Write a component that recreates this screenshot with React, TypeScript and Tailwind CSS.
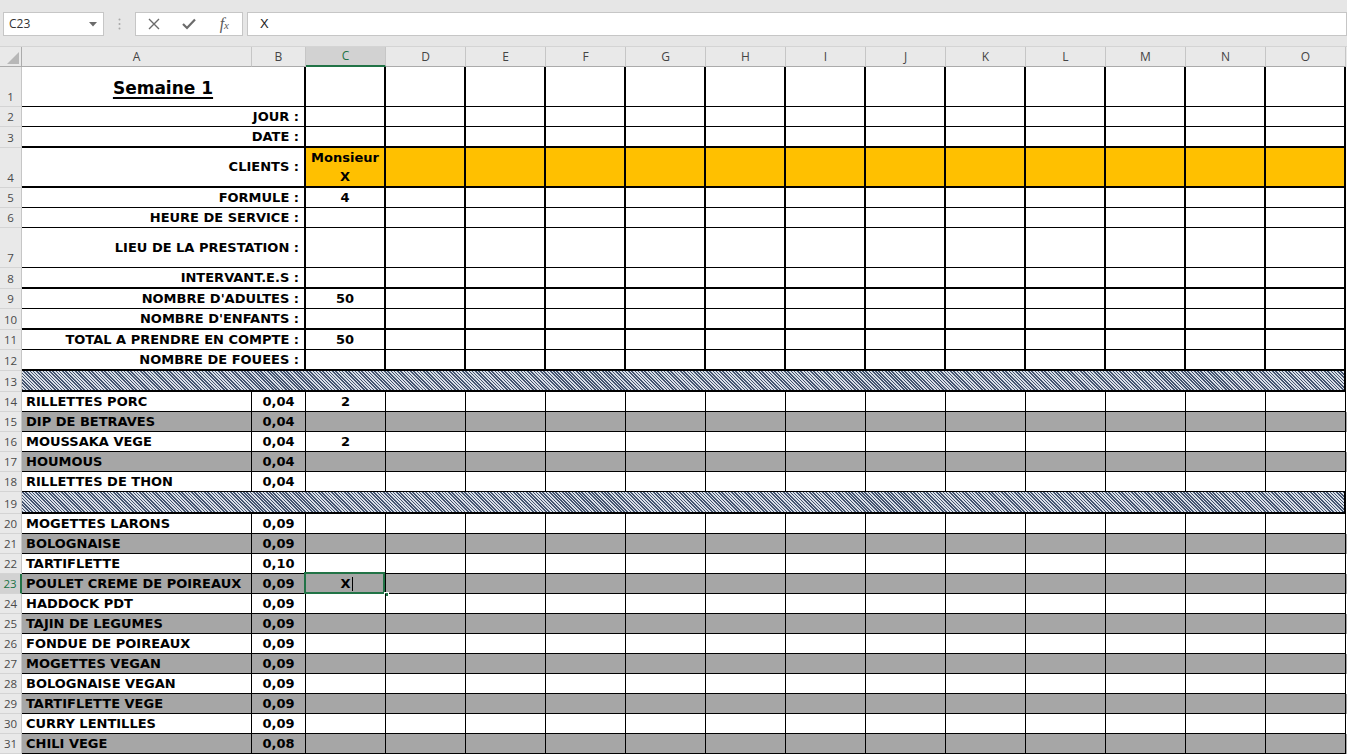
import React from 'react';

const LETTERS = ['C', 'D', 'E', 'F', 'G', 'H', 'I', 'J', 'K', 'L', 'M', 'N', 'O'];
const REST = ['D', 'E', 'F', 'G', 'H', 'I', 'J', 'K', 'L', 'M', 'N', 'O'];

const H: Record<number, string> = {
  20: 'h-[20px]',
  21: 'h-[21px]',
  22: 'h-[22px]',
  40: 'h-[40px]',
};

const CELLFONT = "font-['DejaVu_Sans',sans-serif] font-bold text-[13px] text-black";

function RowHeader({ n, sel }: { n: number; sel?: boolean }) {
  return (
    <div
      className={
        sel
          ? "w-[22px] shrink-0 flex items-end justify-center pb-[1px] bg-[#d2d2d2] border-r-2 border-r-[#217346] border-b border-b-[#d4d4d4] text-[#217346] text-[11.5px] font-['Open_Sans',sans-serif] leading-[16px]"
          : "w-[22px] shrink-0 flex items-end justify-center pb-[1px] bg-[#e9e9e9] border-r border-r-[#c6c6c6] border-b border-b-[#d4d4d4] text-[#4a4a4a] text-[11.5px] font-['Open_Sans',sans-serif] leading-[16px]"
      }
    >
      {n}
    </div>
  );
}

type TopRowProps = {
  n: number;
  h: number;
  label: React.ReactNode;
  title?: boolean;
  c?: React.ReactNode;
  orange?: boolean;
  thick?: boolean;
};

function TopRow({ n, h, label, title, c, orange, thick }: TopRowProps) {
  const bb = thick ? 'border-b-2' : 'border-b';
  return (
    <div className={`flex ${H[h]}`}>
      <RowHeader n={n} />
      <div
        className={
          title
            ? `w-[284px] shrink-0 flex items-center justify-center pt-[4px] border-r-2 border-black ${bb}`
            : `w-[284px] shrink-0 flex items-center justify-end pr-[5px] border-r-2 border-black ${bb}`
        }
      >
        {title ? (
          <span className="font-['DejaVu_Sans',sans-serif] font-bold text-[17px] underline underline-offset-[3px] decoration-[1.5px] text-black">
            {label}
          </span>
        ) : (
          <span className={`${CELLFONT} whitespace-nowrap`}>{label}</span>
        )}
      </div>
      <div
        className={
          orange
            ? `w-[80px] shrink-0 flex items-center justify-center text-center leading-[19px] bg-[#ffc000] border-r-2 border-black ${bb} ${CELLFONT}`
            : `w-[80px] shrink-0 flex items-center justify-center text-center border-r-2 border-black ${bb} ${CELLFONT}`
        }
      >
        {c}
      </div>
      {REST.map((l) => (
        <div
          key={l}
          className={
            orange
              ? `w-[80px] shrink-0 bg-[#ffc000] border-r-2 border-black ${bb}`
              : `w-[80px] shrink-0 border-r-2 border-black ${bb}`
          }
        />
      ))}
    </div>
  );
}

function HatchRow({ n, h }: { n: number; h: number }) {
  return (
    <div className={`flex ${H[h]}`}>
      <RowHeader n={n} />
      <div className="w-[1324px] shrink-0 border-b-2 border-r-2 border-black bg-[repeating-linear-gradient(45deg,#44546f_0px,#44546f_1.1px,#d9dfe8_1.1px,#d9dfe8_2.3px)]" />
    </div>
  );
}

type FoodProps = {
  n: number;
  name: string;
  v: string;
  c?: string;
  gray?: boolean;
  selected?: boolean;
};

function FoodRow({ n, name, v, c, gray, selected }: FoodProps) {
  const bg = gray ? 'bg-[#a6a6a6]' : 'bg-white';
  return (
    <div className={`flex h-[20px] ${bg}`}>
      <RowHeader n={n} sel={selected} />
      <div className={`w-[230px] shrink-0 flex items-center pl-[4px] border-r border-b border-black ${CELLFONT} whitespace-nowrap`}>
        {name}
      </div>
      <div className={`w-[54px] shrink-0 flex items-center justify-center border-r border-b border-black ${CELLFONT}`}>
        {v}
      </div>
      <div className={`relative w-[80px] shrink-0 flex items-center justify-center border-r border-b border-black ${CELLFONT}`}>
        {c}
        {selected && (
          <>
            <span className="absolute left-[46px] top-[3px] w-[1px] h-[14px] bg-black" />
            <div className="absolute -left-[2px] -top-[2px] w-[81px] h-[22px] border-2 border-[#217346]" />
            <div className="absolute -right-[4px] -bottom-[4px] w-[5px] h-[5px] bg-[#217346] border border-white" />
          </>
        )}
      </div>
      {REST.map((l) => (
        <div key={l} className="w-[80px] shrink-0 border-r border-b border-black" />
      ))}
    </div>
  );
}

function FormulaBar() {
  return (
    <div className="h-[47px] bg-[#e6e6e6] border-b border-[#d4d4d4] pt-[12px] flex items-start font-['Open_Sans',sans-serif]">
      <div className="ml-[3px] w-[101px] h-[24px] bg-white border border-[#c6c6c6] flex items-center justify-between pl-[5px] pr-[6px]">
        <span className="text-[12px] text-[#333]">C23</span>
        <svg width="8" height="5" viewBox="0 0 8 5">
          <path d="M0 0 L8 0 L4 4.5 Z" fill="#6b6b6b" />
        </svg>
      </div>
      <div className="w-[31px] h-[24px] flex items-center justify-center">
        <svg width="3" height="12" viewBox="0 0 3 12">
          <circle cx="1.5" cy="1.5" r="1" fill="#a8a8a8" />
          <circle cx="1.5" cy="6" r="1" fill="#a8a8a8" />
          <circle cx="1.5" cy="10.5" r="1" fill="#a8a8a8" />
        </svg>
      </div>
      <div className="w-[108px] h-[24px] bg-white border border-[#c6c6c6] flex items-center">
        <div className="w-[36px] flex justify-center">
          <svg width="12" height="12" viewBox="0 0 12 12">
            <path d="M1 1 L11 11 M11 1 L1 11" stroke="#6b6b6b" strokeWidth="1.4" />
          </svg>
        </div>
        <div className="w-[36px] flex justify-center">
          <svg width="14" height="12" viewBox="0 0 14 12">
            <path d="M1 6 L5 10 L13 1.5" stroke="#6b6b6b" strokeWidth="2.2" fill="none" />
          </svg>
        </div>
        <div className="w-[36px] flex justify-center">
          <span className="font-['Liberation_Serif',serif] italic text-[16px] text-[#5a5a5a] leading-none">
            f<span className="text-[11px]">x</span>
          </span>
        </div>
      </div>
      <div className="ml-[4px] flex-1 h-[24px] bg-white border border-[#c6c6c6] flex items-center pl-[12px]">
        <span className="text-[13px] text-[#222] font-['Liberation_Sans',sans-serif]">X</span>
      </div>
    </div>
  );
}

function ColumnHeaders() {
  return (
    <div className="flex h-[20px] bg-[#e9e9e9] font-['Open_Sans',sans-serif] text-[12px] text-[#444]">
      <div className="relative w-[22px] shrink-0 border-r border-b border-[#ababab]">
        <svg className="absolute right-[2px] bottom-[2px]" width="12" height="12" viewBox="0 0 12 12">
          <path d="M12 0 L12 12 L0 12 Z" fill="#b7b7b7" />
        </svg>
      </div>
      <div className="w-[230px] shrink-0 flex items-center justify-center border-r border-r-[#c6c6c6] border-b border-b-[#ababab]">A</div>
      <div className="w-[54px] shrink-0 flex items-center justify-center border-r border-r-[#c6c6c6] border-b border-b-[#ababab]">B</div>
      {LETTERS.map((l) =>
        l === 'C' ? (
          <div
            key={l}
            className="w-[80px] shrink-0 flex items-center justify-center bg-[#d2d2d2] text-[#217346] border-r border-r-[#c6c6c6] border-b-2 border-b-[#217346]"
          >
            {l}
          </div>
        ) : (
          <div key={l} className="w-[80px] shrink-0 flex items-center justify-center border-r border-r-[#c6c6c6] border-b border-b-[#ababab]">
            {l}
          </div>
        )
      )}
    </div>
  );
}

const FOODS1 = [
  { n: 14, name: 'RILLETTES PORC', v: '0,04', c: '2' },
  { n: 15, name: 'DIP DE BETRAVES', v: '0,04', gray: true },
  { n: 16, name: 'MOUSSAKA VEGE', v: '0,04', c: '2' },
  { n: 17, name: 'HOUMOUS', v: '0,04', gray: true },
  { n: 18, name: 'RILLETTES DE THON', v: '0,04' },
];

const FOODS2 = [
  { n: 20, name: 'MOGETTES LARONS', v: '0,09' },
  { n: 21, name: 'BOLOGNAISE', v: '0,09', gray: true },
  { n: 22, name: 'TARTIFLETTE', v: '0,10' },
  { n: 23, name: 'POULET CREME DE POIREAUX', v: '0,09', gray: true, c: 'X', selected: true },
  { n: 24, name: 'HADDOCK PDT', v: '0,09' },
  { n: 25, name: 'TAJIN DE LEGUMES', v: '0,09', gray: true },
  { n: 26, name: 'FONDUE DE POIREAUX', v: '0,09' },
  { n: 27, name: 'MOGETTES VEGAN', v: '0,09', gray: true },
  { n: 28, name: 'BOLOGNAISE VEGAN', v: '0,09' },
  { n: 29, name: 'TARTIFLETTE VEGE', v: '0,09', gray: true },
  { n: 30, name: 'CURRY LENTILLES', v: '0,09' },
  { n: 31, name: 'CHILI VEGE', v: '0,08', gray: true },
];

export default function App() {
  return (
    <div className="w-[1347px] h-[754px] overflow-hidden bg-white">
      <FormulaBar />
      <ColumnHeaders />
      <div className="flex flex-col">
        <TopRow n={1} h={40} label="Semaine 1" title />
        <TopRow n={2} h={20} label="JOUR :" />
        <TopRow n={3} h={21} label="DATE :" thick />
        <TopRow n={4} h={40} label="CLIENTS :" orange thick c={<span>Monsieur<br />X</span>} />
        <TopRow n={5} h={20} label="FORMULE :" c="4" />
        <TopRow n={6} h={20} label="HEURE DE SERVICE :" />
        <TopRow n={7} h={40} label="LIEU DE LA PRESTATION :" />
        <TopRow n={8} h={21} label="INTERVANT.E.S :" thick />
        <TopRow n={9} h={20} label="NOMBRE D'ADULTES :" c="50" />
        <TopRow n={10} h={21} label="NOMBRE D'ENFANTS :" thick />
        <TopRow n={11} h={20} label="TOTAL A PRENDRE EN COMPTE :" c="50" />
        <TopRow n={12} h={21} label="NOMBRE DE FOUEES :" thick />
        <HatchRow n={13} h={21} />
        {FOODS1.map((f) => (
          <FoodRow key={f.n} {...f} />
        ))}
        <HatchRow n={19} h={22} />
        {FOODS2.map((f) => (
          <FoodRow key={f.n} {...f} />
        ))}
      </div>
    </div>
  );
}
